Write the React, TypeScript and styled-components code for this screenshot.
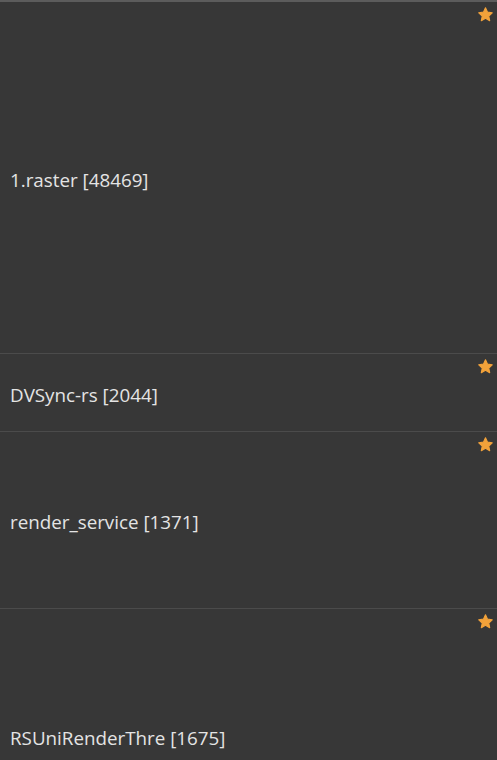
import styled, { createGlobalStyle } from "styled-components";

const GlobalStyle = createGlobalStyle`
  html, body {
    margin: 0;
    padding: 0;
    background: #373737;
  }
`;

const List = styled.div`
  height: 760px;
  overflow: hidden;
  background: #373737;
  border-top: 2px solid #5c5c5c;
  font-family: "Open Sans", "Noto Sans", sans-serif;
`;

const Row = styled.div<{ $height: number }>`
  position: relative;
  display: flex;
  align-items: center;
  height: ${({ $height }) => $height}px;
  padding: 4px 0 0 10px;
  box-sizing: border-box;
  border-bottom: 1px solid #4b4b4b;
`;

const Label = styled.span`
  color: #e4e4e4;
  font-size: 18.8px;
  font-weight: 500;
  white-space: nowrap;
`;

const StarMark = styled.svg`
  position: absolute;
  top: 4px;
  right: 3px;
  width: 17px;
  height: 17px;
`;

const Star = () => (
  <StarMark viewBox="0 0 24 24">
    <path
      d="M12 2.6l2.9 6.1 6.6.8-4.9 4.6 1.3 6.6L12 17.4l-5.9 3.3 1.3-6.6-4.9-4.6 6.6-.8z"
      fill="#f2a23a"
      stroke="#f2a23a"
      strokeWidth="1.6"
      strokeLinejoin="round"
    />
  </StarMark>
);

const rows = [
  { name: "1.raster [48469]", height: 352 },
  { name: "DVSync-rs [2044]", height: 78 },
  { name: "render_service [1371]", height: 177 },
  { name: "RSUniRenderThre [1675]", height: 254 },
];

export default function App() {
  return (
    <>
      <GlobalStyle />
      <List>
        {rows.map((r) => (
          <Row key={r.name} $height={r.height}>
            <Label>{r.name}</Label>
            <Star />
          </Row>
        ))}
      </List>
    </>
  );
}
